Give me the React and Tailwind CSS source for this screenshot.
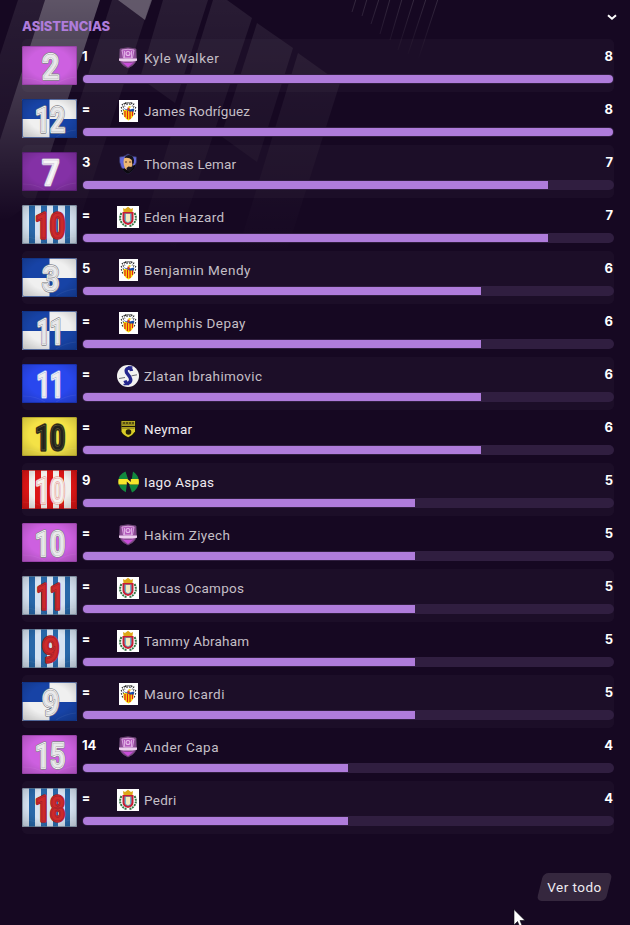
import React from "react";

const PLAYERS = [
  { rank: "1", kit: "violet", n: "2", crest: "hat", name: "Kyle Walker", v: 8, track: "tracking-[0.55px]" },
  { rank: "=", kit: "quarters", n: "12", crest: "sabadell", name: "James Rodríguez", v: 8, track: "tracking-[0.1px]" },
  { rank: "3", kit: "purple", n: "7", crest: "face", name: "Thomas Lemar", v: 7, track: "tracking-[0.1px]" },
  { rank: "=", kit: "stripes", n: "10", crest: "lugo", name: "Eden Hazard", v: 7, track: "tracking-[0.4px]" },
  { rank: "5", kit: "quarters", n: "3", crest: "sabadell", name: "Benjamin Mendy", v: 6, track: "tracking-[0.5px]" },
  { rank: "=", kit: "quarters", n: "11", crest: "sabadell", name: "Memphis Depay", v: 6, track: "tracking-[0.4px]" },
  { rank: "=", kit: "blue", n: "11", crest: "round", name: "Zlatan Ibrahimovic", v: 6, track: "tracking-[0.4px]" },
  { rank: "=", kit: "yellow", n: "10", crest: "gold", name: "Neymar", v: 6, lit: true, track: "tracking-[0.25px]" },
  { rank: "9", kit: "red", n: "10", crest: "green", name: "Iago Aspas", v: 5, lit: true, track: "tracking-[0.3px]" },
  { rank: "=", kit: "violet", n: "10", crest: "hat", name: "Hakim Ziyech", v: 5, track: "tracking-[0.4px]" },
  { rank: "=", kit: "stripes", n: "11", crest: "lugo", name: "Lucas Ocampos", v: 5, track: "tracking-[0.25px]" },
  { rank: "=", kit: "stripes", n: "9", crest: "lugo", name: "Tammy Abraham", v: 5, track: "tracking-[0.2px]" },
  { rank: "=", kit: "quarters", n: "9", crest: "sabadell", name: "Mauro Icardi", v: 5, track: "tracking-[0.45px]" },
  { rank: "14", kit: "violet", n: "15", crest: "hat", name: "Ander Capa", v: 4, track: "tracking-[0.5px]" },
  { rank: "=", kit: "stripes", n: "18", crest: "lugo", name: "Pedri", v: 4, track: "tracking-[0.3px]" },
];

const BAR_WIDTH = { 8: 530, 7: 465, 6: 398, 5: 332, 4: 265 };

const SILVER = { edge: "#85858b", rim: "#ffffff", line: "#9b9ba0", fill: "#e9e9eb" };
const KITS = {
  violet: { base: "#cd60e0", border: "#8c3a9c", ink: SILVER },
  purple: { base: "#8431a6", border: "#4f1767", ink: { edge: "#a98bbb", rim: "#fafafa", line: "#c9b3d4", fill: "#f6f6f6" } },
  quarters: { base: "#f0f0f0", border: "#0f2f7c", ink: SILVER },
  blue: { base: "#2947ee", border: "#142b9c", ink: { edge: "#8fa0ec", rim: "#ffffff", line: "#a0a8e0", fill: "#eeeeee" } },
  yellow: { base: "#f4e246", border: "#9c8f22", ink: { edge: "#4d471b", rim: "#1c1c18", line: "#7d7740", fill: "#22221d" } },
  red: { base: "#f1efec", border: "#a01010", ink: { edge: "#e39a94", rim: "#f7f3f0", line: "#e58a84", fill: "#f5f1ee" } },
  stripes: { base: "#d5e2f1", border: "#5c6f83", ink: { edge: "#a3202a", rim: "#cb272a", line: "#96202a", fill: "#cd2a2b" } },
};

function Kit({ kit, n }) {
  const k = KITS[kit];
  const width = n === "11" ? 27 : n.length === 2 ? 30 : 17;
  const text = {
    x: n.length === 1 ? 28.7 : 28,
    y: 32.7,
    textAnchor: "middle",
    textLength: width,
    lengthAdjust: "spacingAndGlyphs",
    className: "font-['Roboto'] text-[34.5px] font-semibold leading-none",
    strokeLinejoin: "round",
  };
  return (
    <svg width="55" height="39" viewBox="0 0 55 39" className="block overflow-visible">
      <defs>
        <radialGradient id={`fold-${kit}`} cx="50%" cy="45%" r="68%">
          <stop offset="0.55" stopColor="#000" stopOpacity="0" />
          <stop offset="1" stopColor="#000" stopOpacity="0.18" />
        </radialGradient>
      </defs>
      <rect width="55" height="39" rx="1.5" fill={k.base} />
      {kit === "quarters" && <path d="M0 0h27.5v20H0zM27.5 20H55v19H27.5z" fill="#1743a6" />}
      {kit === "stripes" && <path d="M7 0h6v39H7zM19 0h6v39h-6zM31 0h5v39h-5zM43 0h5v39h-5z" fill="#2867a8" />}
      {kit === "red" && <path d="M0 0h7v39H0zM13 0h6v39h-6zM25 0h6v39h-6zM37 0h5v39h-5zM49 0h6v39h-6z" fill="#dc1515" />}
      <rect width="55" height="39" rx="1.5" fill={`url(#fold-${kit})`} />
      <path d="M1 32Q14 32 23 38M54 31Q43 32 34 38" fill="none" stroke="#fff" strokeOpacity=".06" strokeWidth="1.2" />
      <rect x=".5" y=".5" width="54" height="38" rx="1.5" fill="none" stroke={k.border} strokeOpacity=".65" />
      <text {...text} fill={k.ink.edge} stroke={k.ink.edge} strokeWidth="3.6">{n}</text>
      <text {...text} fill={k.ink.rim} stroke={k.ink.rim} strokeWidth="2">{n}</text>
      <text {...text} fill={k.ink.fill} stroke={k.ink.line} strokeWidth=".45">{n}</text>
    </svg>
  );
}

function Crest({ type }) {
  return (
    <svg width="22" height="22" viewBox="0 0 22 22" className="block">
      {type === "hat" && (
        <g>
          <path d="M3 2Q11 -.5 19 2L19.5 13Q18 18 11 21Q4 18 2.500 13Z" fill="#8d4b96" stroke="#65456d" strokeWidth=".8" />
          <path d="M5 3L6.500 11H15.500L17 3Q11 1.500 5 3Z" fill="#b35bbd" stroke="#d6a2dc" strokeWidth="1" />
          <circle cx="11" cy="6.500" r="2" fill="#b75fc0" stroke="#e8bdec" strokeWidth="1.1" />
          <path d="M7.500 4V11M14.500 4V11" stroke="#dcabe2" strokeWidth="1" />
          <path d="M2 11.500H20V13.700Q11 15.500 2 13.700Z" fill="#ecd0ee" />
          <path d="M5.500 15.500Q11 16.500 16.500 15.500L11 20Z" fill="#c94dda" />
        </g>
      )}
      {type === "sabadell" && (
        <g>
          <rect x="2" width="19" height="22" fill="#fff" />
          <g fill="none" stroke="#222" strokeWidth="1.7" strokeDasharray="1 1">
            <path d="M5 5Q11 .5 18 5M4 8L8 6M19 8L15 6M4 11L7 10M19 11L16 10M5 14L7 13M18 14L16 13M8 3L11 5M15 3L12 5" />
          </g>
          <path d="M6.500 10H16.500V14.500Q16 18 11.500 20.500Q7 18 6.500 14.500Z" fill="#f8dc0b" />
          <path d="M8 11V17M10.500 11V19M13 11V19M15.500 11V16" stroke="#df2016" strokeWidth="1.200" />
          <path d="M6 8L10 9.500L11.500 7.500L13 9.500L17 8.500V11.500H13L9 10Z" fill="#174ba5" />
          <path d="M10.500 7.500H12.500V10.500H10.500Z" fill="#e43b18" />
          <path d="M11.500 6H13.500V8H11.500Z" fill="#f4d820" />
        </g>
      )}
      {type === "face" && (
        <g>
          <path d="M2.500 4Q7 4 11 1Q15 4 19.500 4Q20.500 15 11 21Q1.500 15 2.500 4Z" fill="#6467d8" stroke="#34315a" strokeWidth=".8" />
          <path d="M5 16Q8 15 14 13.500L19 11.500Q17 18 11 21Q7 19 5 16Z" fill="#0c0a10" />
          <path d="M6.500 9Q6.500 3 11.500 3Q17 3.500 16 11L15 15Q11 19 8 15.500Q6.500 12 6.500 9Z" fill="#efb873" />
          <path d="M7.500 5Q8.500 2 12 2Q18 2.500 16.800 10L15.300 12L14.800 7Q12 4 7.500 5Z" fill="#16131b" />
          <path d="M9.500 15L11.500 13.500L14.500 14L15.500 11L16 15L12.500 19L10 17.500Z" fill="#1c1620" />
          <path d="M8 9H10M12 9H14.200" stroke="#5a3828" />
        </g>
      )}
      {type === "lugo" && (
        <g>
          <rect width="22" height="22" fill="#fff" />
          <path d="M4.500 7Q1.500 13 5 17Q7.500 20 10 20M17.500 7Q20.500 13 17 17Q14.500 20 12 20" fill="none" stroke="#367746" strokeWidth="2" strokeDasharray="2 .8" />
          <path d="M6 2L8 3L11 .7L14 3L16 2L15.500 6H6.500Z" fill="#dca819" />
          <path d="M5.500 6H16.500V14Q16 18 11 19Q6 18 5.500 14Z" fill="#c71d33" />
          <path d="M7.500 7.500H14.500V14Q14 16.500 11 17Q8 16.500 7.500 14Z" fill="#6eb2cc" />
          <path d="M9 8H13V14.500Q12.500 16 11 16Q9.500 16 9 14.500Z" fill="#f3eac0" />
        </g>
      )}
      {type === "round" && (
        <g>
          <circle cx="11" cy="11" r="11" fill="#f3f2f1" />
          <path d="M14.500 6Q14 2.800 11.300 3.200Q8.300 4 9.500 7.500L12.800 12Q15 16 11.800 18Q9 19 8 15.500" fill="none" stroke="#25268d" strokeWidth="3.400" />
          <path d="M6.500 19.500H12M11 2H15.500" stroke="#25268d" strokeWidth="1.300" />
          <path d="M2 13.500L8 12.500M14.500 10.800L20 9.800" stroke="#6c6c75" strokeWidth="1" />
        </g>
      )}
      {type === "gold" && (
        <g>
          <path d="M3.500 2H19V14Q17 18 11.200 20.500Q5 18 3.500 14Z" fill="#17130d" />
          <path d="M4.500 3H18V13.500Q16 17 11.200 19.200Q6 17 4.500 13.500Z" fill="#d9cb27" />
          <path d="M5 3.500H17.500V7H5Z" fill="#91871e" />
          <path d="M6 5H17" stroke="#443e11" strokeWidth="1.500" strokeDasharray="2 1" />
          <path d="M4.500 8.500H18" stroke="#1c180e" strokeWidth="1.500" />
          <path d="M5 10.500H17.500" stroke="#867d20" strokeWidth=".7" />
          <circle cx="11.500" cy="14" r="2.800" fill="#242008" />
        </g>
      )}
      {type === "green" && (
        <g>
          <path d="M8.500 .5Q1.500 3.500 1.200 10.500Q2 18 8.800 21.300L9.800 13.500H1.600V8H11ZM16 .5Q21.500 4 22 10.500Q21.500 18 15 21.500L12 13.500H21.600V8H14.800Z" fill="#12883e" />
          <path d="M1.600 8H10.500L13.800 11V8H21.600Q22.200 11 21.600 13.500H13L9.800 10.500V13.500H1.600Q1 11 1.600 8Z" fill="#f7e62b" />
        </g>
      )}
    </svg>
  );
}

function Backdrop() {
  return (
    <svg width="630" height="280" className="pointer-events-none absolute left-0 top-0">
      <defs>
        <linearGradient id="beam" x1="0" y1="0" x2="0" y2="220" gradientUnits="userSpaceOnUse">
          <stop offset="0" stopColor="#fff" stopOpacity=".31" />
          <stop offset=".4" stopColor="#fff" stopOpacity=".19" />
          <stop offset="1" stopColor="#fff" stopOpacity="0" />
        </linearGradient>
        <linearGradient id="faint" x1="0" y1="0" x2="0" y2="255" gradientUnits="userSpaceOnUse">
          <stop offset="0" stopColor="#fff" stopOpacity=".08" />
          <stop offset=".4" stopColor="#fff" stopOpacity=".045" />
          <stop offset="1" stopColor="#fff" stopOpacity="0" />
        </linearGradient>
        <linearGradient id="ray" x1="0" y1="0" x2="0" y2="60" gradientUnits="userSpaceOnUse">
          <stop offset="0" stopColor="#fff" stopOpacity=".13" />
          <stop offset="1" stopColor="#fff" stopOpacity="0" />
        </linearGradient>
      </defs>
      <g fill="url(#faint)">
        <path d="M18 0H45L0 140V55Z" />
        <path d="M112 0H151L70 250H32Z" />
        <path d="M163 0H208L175 103L140 78Z" />
        <path d="M213 0H227L252 18L175 250L145 220Z" />
        <path d="M257 23L293 48L257 162L221 136Z" />
        <path d="M298 53L340 83L287 250H238Z" />
      </g>
      <path d="M45 0H100L35 200L0 225V140Z" fill="url(#beam)" />
      <path d="M118 0H152L145 20Z" fill="#fff" fillOpacity=".27" />
      <path d="M438 -1L418 60M426 -1L408 54M414 -1L398 50M402 -1L390 40M390 -1L380 34M379 -1L371 24M367 -1L362 16M356 -1L352 12" stroke="url(#ray)" />
    </svg>
  );
}

function Row({ p, odd }) {
  return (
    <li className={`flex h-[53px] w-[592px] rounded-[5px] ${odd ? "bg-[#ffffff07]" : ""}`}>
      <div className="w-[60px] shrink-0 pt-[7px]">
        <Kit kit={p.kit} n={p.n} />
      </div>
      <div className="flex min-w-0 flex-1 flex-col">
        <div className="flex h-[35px]">
          <span className={`w-[35px] font-bold leading-4 text-white ${p.rank === "=" ? "pt-[9px] font-['Roboto'] text-[14px]" : "pt-[9px] font-['Inter'] text-[13px]"}`}>{p.rank}</span>
          <span className="pt-2">
            <Crest type={p.crest} />
          </span>
          <span className={`flex-1 whitespace-nowrap pl-[5px] pt-[10px] font-['Roboto'] text-[13.5px] leading-[18px] ${p.track} ${p.lit ? "text-[#eeeaf0]" : "text-[#c4bfc6]"}`}>
            {p.name}
          </span>
          <span className="pr-px pt-[9px] font-['Inter'] text-[13px] font-bold leading-4 text-white">{p.v}</span>
        </div>
        <div className="h-[10px] w-[532px] overflow-hidden rounded-full bg-[#301e40] p-px">
          <div
            className={`h-2 bg-[#af7cdb] ${p.v === 8 ? "rounded-full" : "rounded-l-full"}`}
            style={{ width: BAR_WIDTH[p.v] }}
          />
        </div>
      </div>
    </li>
  );
}

export default function App() {
  return (
    <main className="relative h-[925px] w-[630px] overflow-hidden bg-[#160822]">
      <Backdrop />
      <div className="relative flex flex-col pl-[22px]">
        <header className="flex h-[39px] justify-between pr-[13px]">
          <h1 className="pt-[18px] font-['Inter'] text-[13px] font-extrabold leading-4 tracking-[-0.08px] text-[#af7cdb]">ASISTENCIAS</h1>
          <svg width="10" height="7" viewBox="0 0 10 7" className="mt-[14px]">
            <path d="M1 1.200L5 4.700L9 1.200" fill="none" stroke="#fff" strokeWidth="2" />
          </svg>
        </header>
        <ul>
          {PLAYERS.map((p, i) => (
            <Row key={p.name} p={p} odd={i % 2 === 0} />
          ))}
        </ul>
        <footer className="flex justify-end pr-[18px] pt-[39px]">
          <button className="relative flex h-7 w-[75px] items-center justify-center font-['Roboto'] text-[13.5px] tracking-[0.45px] text-[#efecf1]">
            <span className="absolute inset-x-[3px] inset-y-0 -skew-x-[14deg] rounded-[5px] bg-[#35273e]" />
            <span className="relative">Ver todo</span>
          </button>
        </footer>
      </div>
      <svg width="14" height="20" viewBox="0 0 14 20" className="absolute left-[513px] top-[909px]">
        <path d="M1 .5V16L4.500 12.500L7 18.500L9.500 17.500L7 11.500H12Z" fill="#fff" stroke="#0b0611" strokeWidth=".6" />
      </svg>
    </main>
  );
}
